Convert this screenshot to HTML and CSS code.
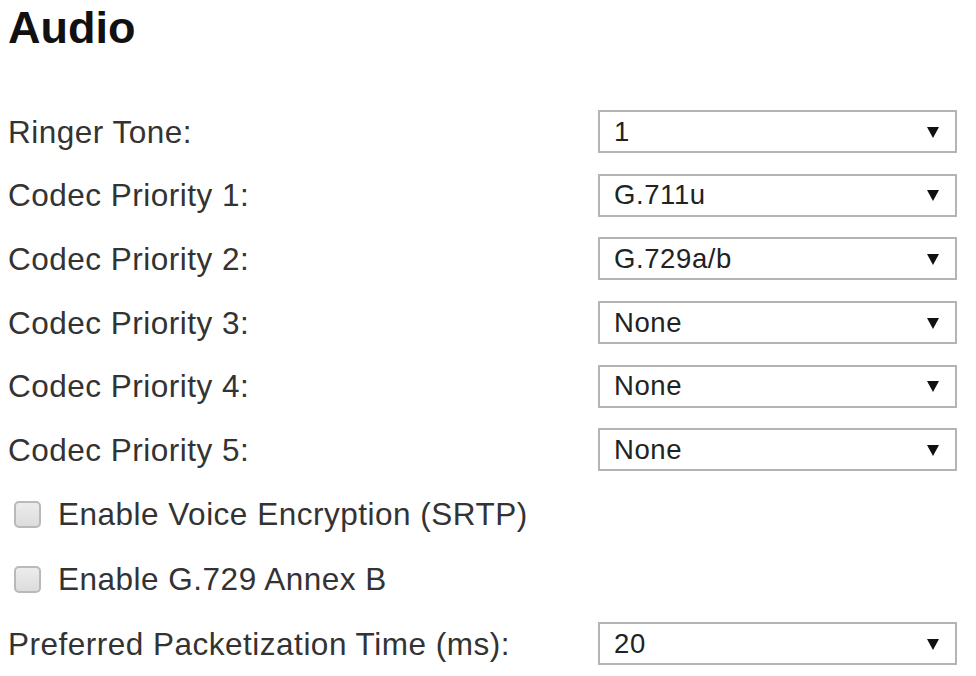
FILE: index.html
```html
<!DOCTYPE html>
<html>
<head>
<meta charset="utf-8">
<link rel="stylesheet" href="styles.css">
</head>
<body>
<div class="page">
  <h1 class="title">Audio</h1>
  <div class="form">
    <div class="row">
      <span class="label">Ringer Tone:</span>
      <div class="select"><span class="value">1</span></div>
    </div>
    <div class="row">
      <span class="label">Codec Priority 1:</span>
      <div class="select"><span class="value">G.711u</span></div>
    </div>
    <div class="row">
      <span class="label">Codec Priority 2:</span>
      <div class="select"><span class="value">G.729a/b</span></div>
    </div>
    <div class="row">
      <span class="label">Codec Priority 3:</span>
      <div class="select"><span class="value">None</span></div>
    </div>
    <div class="row">
      <span class="label">Codec Priority 4:</span>
      <div class="select"><span class="value">None</span></div>
    </div>
    <div class="row">
      <span class="label">Codec Priority 5:</span>
      <div class="select"><span class="value">None</span></div>
    </div>
    <div class="row check-row">
      <span class="checkbox"></span>
      <span class="label">Enable Voice Encryption (SRTP)</span>
    </div>
    <div class="row check-row">
      <span class="checkbox"></span>
      <span class="label">Enable G.729 Annex B</span>
    </div>
    <div class="row last-row">
      <span class="label">Preferred Packetization Time (ms):</span>
      <div class="select"><span class="value">20</span></div>
    </div>
  </div>
</div>
</body>
</html>
```
FILE: styles.css
```css
html, body {
  margin: 0;
  padding: 0;
  background: #ffffff;
}

.page {
  width: 976px;
  height: 676px;
  overflow: hidden;
  padding: 0 19px 0 8px;
  box-sizing: border-box;
  font-family: "Liberation Sans", Arial, sans-serif;
  color: #333333;
}

.title {
  margin: 0;
  height: 100px;
  padding-top: 2px;
  box-sizing: border-box;
  font-size: 45px;
  font-weight: bold;
  line-height: 52px;
  color: #111111;
}

.form {
  display: flex;
  flex-direction: column;
}

.row {
  display: flex;
  align-items: center;
  justify-content: space-between;
  height: 63.6px;
}

.label {
  font-size: 31.5px;
  letter-spacing: 0.5px;
  line-height: 36px;
  color: #333333;
}

.select {
  position: relative;
  width: 359px;
  height: 43px;
  box-sizing: border-box;
  border: 2px solid #b4b4b4;
  background: #ffffff;
  display: flex;
  align-items: center;
  padding-left: 14px;
}

.select::after {
  content: "";
  position: absolute;
  right: 16px;
  top: 50%;
  margin-top: -5px;
  border-left: 6px solid transparent;
  border-right: 6px solid transparent;
  border-top: 11px solid #111111;
}

.value {
  font-size: 27.5px;
  letter-spacing: 0.6px;
  color: #222222;
  line-height: 32px;
}

.check-row {
  justify-content: flex-start;
  height: 65.2px;
}

.last-row {
  height: 64px;
}

.checkbox {
  width: 27px;
  height: 27px;
  box-sizing: border-box;
  margin-left: 6px;
  margin-right: 17px;
  border: 2px solid #b9b9b9;
  border-radius: 5px;
  background: linear-gradient(#ececec, #dcdcdc);
}
```
